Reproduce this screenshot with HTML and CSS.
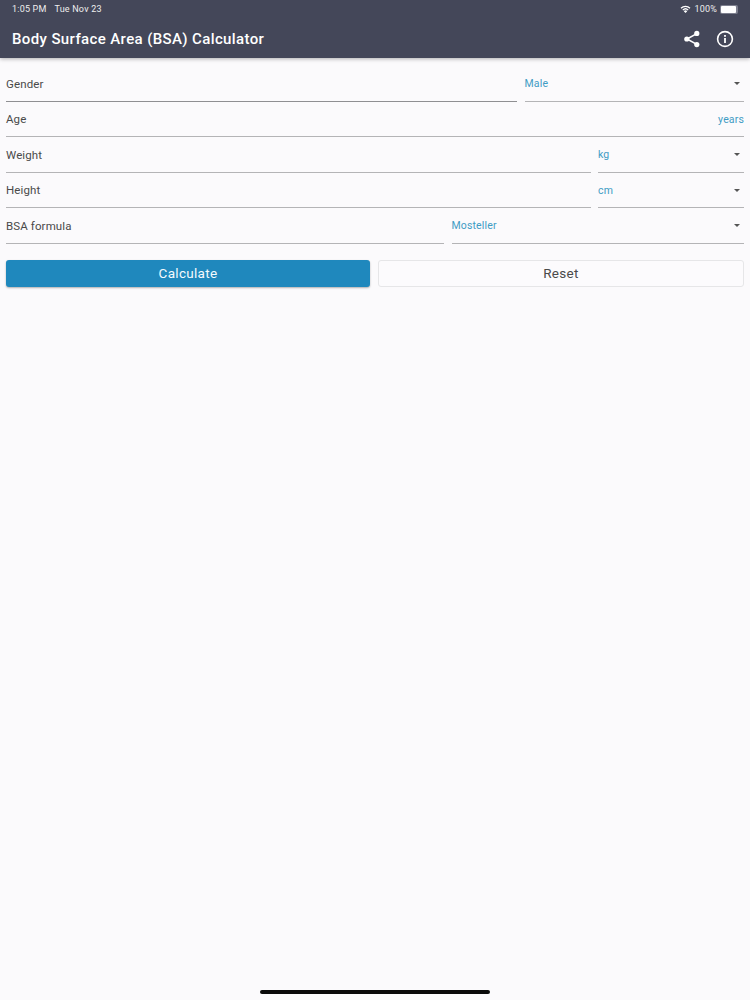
FILE: index.html
```html
<!DOCTYPE html>
<html lang="en">
<head>
    <meta charset="UTF-8">
    <meta name="viewport" content="width=device-width, initial-scale=1.0">
    <title>Body Surface Area (BSA) Calculator</title>
    <link rel="stylesheet" href="styles.css">
</head>
<body>
    <div class="page">
        <header class="app-bar">
            <div class="status-bar">
                <div class="status-time">
                    <span>1:05 PM</span>
                    <span>Tue Nov 23</span>
                </div>
                <div class="status-right">
                    <svg class="wifi" width="11" height="8" viewBox="0 0 22 16">
                        <path d="M11 16l-3.4-3.6a4.8 4.8 0 0 1 6.8 0z" fill="#fff"/>
                        <path d="M5.6 10.2a7.8 7.8 0 0 1 10.8 0" fill="none" stroke="#fff" stroke-width="2.6"/>
                        <path d="M2 6.4a13 13 0 0 1 18 0" fill="none" stroke="#fff" stroke-width="2.6"/>
                    </svg>
                    <span>100%</span>
                    <div class="battery"><div class="battery-fill"></div></div>
                </div>
            </div>
            <div class="toolbar">
                <h1>Body Surface Area (BSA) Calculator</h1>
                <div class="toolbar-icons">
                    <svg width="18" height="18" viewBox="0 0 18 18">
                        <path d="M13.8 3.6L4 9l9.8 5.4" fill="none" stroke="#fff" stroke-width="1.6"/>
                        <circle cx="13.8" cy="3.4" r="2.6" fill="#fff"/>
                        <circle cx="3.8" cy="9" r="2.6" fill="#fff"/>
                        <circle cx="13.8" cy="14.6" r="2.6" fill="#fff"/>
                    </svg>
                    <svg width="18" height="18" viewBox="0 0 18 18">
                        <circle cx="9" cy="9" r="7.4" fill="none" stroke="#fff" stroke-width="1.6"/>
                        <rect x="8.1" y="8" width="1.8" height="5" fill="#fff"/>
                        <rect x="8.1" y="5" width="1.8" height="1.8" fill="#fff"/>
                    </svg>
                </div>
            </div>
        </header>

        <form class="form">
            <div class="row">
                <div class="field grow"><span class="label">Gender</span></div>
                <div class="field select gender"><span class="value">Male</span><span class="caret"></span></div>
            </div>
            <div class="row">
                <div class="field grow"><span class="label">Age</span><span class="value">years</span></div>
            </div>
            <div class="row">
                <div class="field grow"><span class="label">Weight</span></div>
                <div class="field select unit"><span class="value">kg</span><span class="caret"></span></div>
            </div>
            <div class="row">
                <div class="field grow"><span class="label">Height</span></div>
                <div class="field select unit"><span class="value">cm</span><span class="caret"></span></div>
            </div>
            <div class="row">
                <div class="field grow"><span class="label">BSA formula</span></div>
                <div class="field select formula"><span class="value">Mosteller</span><span class="caret"></span></div>
            </div>
            <div class="buttons">
                <button type="button" class="btn btn-primary">Calculate</button>
                <button type="button" class="btn btn-outline">Reset</button>
            </div>
        </form>

        <div class="home-indicator"></div>
    </div>
</body>
</html>
```

FILE: styles.css
```css
* {
    box-sizing: border-box;
}

body {
    margin: 0;
    background-color: #fbfafc;
    font-family: Roboto, "Liberation Sans", sans-serif;
    color: #444;
}

.page {
    display: flex;
    flex-direction: column;
    height: 1000px;
}

.app-bar {
    height: 58px;
    background-color: #444759;
    color: #fff;
    box-shadow: 0 1px 4px rgba(0, 0, 0, 0.3);
}

.status-bar {
    display: flex;
    justify-content: space-between;
    align-items: center;
    height: 18px;
    padding: 0 12px;
    font-size: 9px;
    letter-spacing: 0.2px;
    color: #eee;
}

.status-time {
    display: flex;
    gap: 8px;
}

.status-right {
    display: flex;
    align-items: center;
    gap: 3px;
}

.battery {
    width: 18px;
    height: 9px;
    padding: 1px;
    border-radius: 2px;
    background-color: #7d7f8e;
}

.battery-fill {
    width: 15px;
    height: 7px;
    border-radius: 1px;
    background-color: #fff;
}

.toolbar {
    display: flex;
    justify-content: space-between;
    align-items: center;
    height: 40px;
    padding: 2px 16px 0 12px;
}

.toolbar h1 {
    margin: 0;
    font-size: 15px;
    font-weight: 500;
    letter-spacing: 0.38px;
}

.toolbar-icons {
    display: flex;
    align-items: center;
    gap: 15px;
}

.form {
    padding: 8px 6px 0;
}

.row {
    display: flex;
    gap: 7.5px;
    height: 35.5px;
}

.field {
    display: flex;
    justify-content: space-between;
    align-items: center;
    padding-top: 1px;
    border-bottom: 1px solid #b4b4b6;
}

.field.grow {
    flex: 1;
}

.row:first-child .field.grow {
    border-bottom-color: #8f8f92;
}

.label {
    font-size: 11.5px;
    letter-spacing: 0.12px;
    color: #4a4a4a;
}

.value {
    font-size: 10.5px;
    letter-spacing: 0.15px;
    color: #3f9cc4;
}

.select {
    padding-right: 4px;
}

.gender {
    width: 219.5px;
}

.unit {
    width: 146px;
}

.formula {
    width: 292.5px;
}

.caret {
    width: 0;
    height: 0;
    border-left: 3.5px solid transparent;
    border-right: 3.5px solid transparent;
    border-top: 3.5px solid #555;
}

.buttons {
    display: flex;
    gap: 8px;
    margin-top: 16px;
}

.btn {
    flex: 1;
    height: 27px;
    padding: 0;
    border-radius: 3px;
    font-family: inherit;
    font-size: 13.5px;
    letter-spacing: 0.3px;
}

.btn-primary {
    border: none;
    background-color: #1f88bd;
    color: #f4fafd;
    box-shadow: 0 1px 2px rgba(0, 0, 0, 0.3);
}

.btn-outline {
    border: 1px solid #e6e6e8;
    background-color: #fcfbfd;
    color: #4a4a4a;
}

.home-indicator {
    width: 230px;
    height: 4px;
    margin: auto auto 6px;
    border-radius: 2px;
    background-color: #0a0a0a;
}
```
